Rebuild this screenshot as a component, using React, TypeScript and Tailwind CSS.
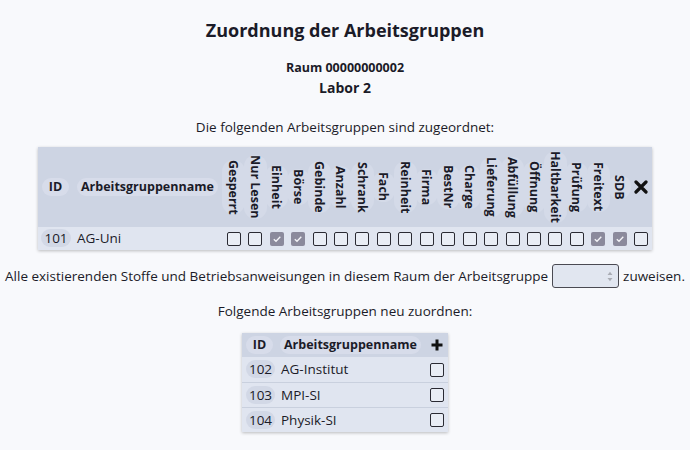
import React from "react";

const columns = [
  "Gesperrt",
  "Nur Lesen",
  "Einheit",
  "Börse",
  "Gebinde",
  "Anzahl",
  "Schrank",
  "Fach",
  "Reinheit",
  "Firma",
  "BestNr",
  "Charge",
  "Lieferung",
  "Abfüllung",
  "Öffnung",
  "Haltbarkeit",
  "Prüfung",
  "Freitext",
  "SDB",
];

const checked = ["Einheit", "Börse", "Freitext", "SDB"];

const others = [
  { id: 102, name: "AG-Institut" },
  { id: 103, name: "MPI-SI" },
  { id: 104, name: "Physik-SI" },
];

const Checkbox = ({ on }: { on?: boolean }) =>
  on ? (
    <span className="w-[14px] h-[14px] rounded-[2px] bg-[#8b8a9c] flex items-center justify-center">
      <svg width="10" height="10" viewBox="0 0 10 10">
        <path d="M1.8 5.2 L4 7.3 L8.3 2.8" fill="none" stroke="#f4f4f8" strokeWidth="1.3" />
      </svg>
    </span>
  ) : (
    <span className="w-[14px] h-[14px] rounded-[2px] border border-[#2a2a33] bg-[#e9edf5]" />
  );

const CrossIcon = () => (
  <svg width="14" height="14" viewBox="0 0 14 14">
    <path d="M2 2 L12 12 M12 2 L2 12" stroke="#111" strokeWidth="3.2" strokeLinecap="round" />
  </svg>
);

const PlusIcon = () => (
  <svg width="12" height="12" viewBox="0 0 12 12">
    <path d="M6 0.5 V11.5 M0.5 6 H11.5" stroke="#111" strokeWidth="3" />
  </svg>
);

export default function App() {
  return (
    <div className="min-h-screen bg-[#f8f9fc] font-['Open_Sans',sans-serif] text-[#1b1b28] flex flex-col items-center">
      <h1 className="mt-[18px] text-[18px] leading-[24px] font-bold">Zuordnung der Arbeitsgruppen</h1>
      <div className="mt-[18px] text-[12.5px] leading-[16px] font-bold">Raum 00000000002</div>
      <div className="mt-[2px] text-[14px] leading-[20px] font-bold">Labor 2</div>
      <div className="mt-[20px] text-[13.5px] leading-[18px]">Die folgenden Arbeitsgruppen sind zugeordnet:</div>

      {/* Zugeordnete Arbeitsgruppen */}
      <div className="mt-[11px] w-[614px] shadow-[0_1px_3px_rgba(0,0,0,0.25)]">
        <div className="grid grid-cols-[36px_149px_repeat(20,minmax(0,1fr))] h-[80px] bg-[#cdd4e3] items-center text-[12.5px] font-bold">
          <div className="pl-[4px]">
            <span className="inline-block w-[27px] h-[18px] leading-[18px] text-center rounded-full bg-[#d7dcea]">ID</span>
          </div>
          <div className="pl-[3px]">
            <span className="inline-block h-[18px] leading-[18px] px-[4px] rounded-full bg-[#d7dcea]">Arbeitsgruppenname</span>
          </div>
          {columns.map((c) => (
            <div key={c} className="flex justify-center">
              <span className="[writing-mode:vertical-rl] leading-[17px] py-[3px] rounded-full bg-[#d4dae8] whitespace-nowrap">
                {c}
              </span>
            </div>
          ))}
          <div className="flex justify-center">
            <CrossIcon />
          </div>
        </div>
        <div className="grid grid-cols-[36px_149px_repeat(20,minmax(0,1fr))] h-[23px] bg-[#e0e5f0] items-center text-[13.5px]">
          <div className="pl-[3px]">
            <span className="inline-block w-[30px] h-[18px] leading-[18px] text-center rounded-full bg-[#d2d8e6]">101</span>
          </div>
          <div className="pl-[3px]">AG-Uni</div>
          {columns.map((c) => (
            <div key={c} className="flex justify-center">
              <Checkbox on={checked.includes(c)} />
            </div>
          ))}
          <div className="flex justify-center">
            <Checkbox />
          </div>
        </div>
      </div>

      <div className="mt-[14px] flex items-center gap-[4px] text-[13.5px] leading-[18px]">
        <span>Alle existierenden Stoffe und Betriebsanweisungen in diesem Raum der Arbeitsgruppe</span>
        <span className="relative w-[67px] h-[24px] rounded-[3px] border border-[#4a4a52] bg-[#e1e6f0]">
          <svg className="absolute right-[5px] top-[6px]" width="6" height="11" viewBox="0 0 6 11">
            <path d="M0.5 4 L3 0.8 L5.5 4 Z M0.5 7 L3 10.2 L5.5 7 Z" fill="#a9acb4" />
          </svg>
        </span>
        <span>zuweisen.</span>
      </div>

      <div className="mt-[14px] text-[13.5px] leading-[18px]">Folgende Arbeitsgruppen neu zuordnen:</div>

      {/* Neu zuordnen */}
      <div className="mt-[13px] w-[206px] shadow-[0_1px_3px_rgba(0,0,0,0.25)] text-[13.5px]">
        <div className="grid grid-cols-[35px_1fr_23px] h-[24px] bg-[#cdd4e3] items-center text-[12.5px] font-bold">
          <div className="pl-[4px]">
            <span className="inline-block w-[27px] h-[18px] leading-[18px] text-center rounded-full bg-[#d7dcea]">ID</span>
          </div>
          <div className="pl-[3px]">
            <span className="inline-block h-[18px] leading-[18px] px-[4px] rounded-full bg-[#d7dcea]">Arbeitsgruppenname</span>
          </div>
          <div className="flex justify-center">
            <PlusIcon />
          </div>
        </div>
        {others.map((o, i) => (
          <div
            key={o.id}
            className={`grid grid-cols-[35px_1fr_23px] h-[25px] bg-[#e0e5f0] items-center ${i > 0 ? "border-t border-[#c9d0de]" : ""}`}
          >
            <div className="pl-[4px]">
              <span className="inline-block w-[29px] h-[18px] leading-[18px] text-center rounded-full bg-[#d2d8e6]">{o.id}</span>
            </div>
            <div className="pl-[4px]">{o.name}</div>
            <div className="flex justify-center">
              <Checkbox />
            </div>
          </div>
        ))}
      </div>
    </div>
  );
}
